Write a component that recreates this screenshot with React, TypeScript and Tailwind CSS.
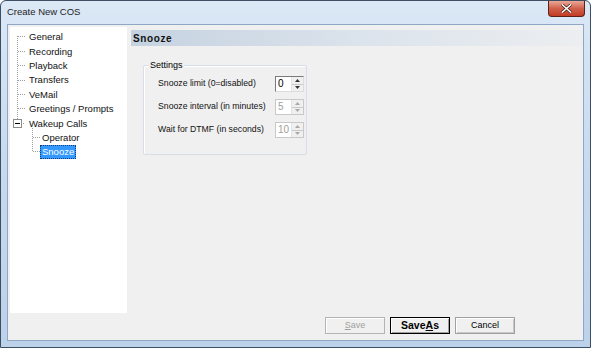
import React from 'react';

const font = "font-['Liberation_Sans',Arial,sans-serif]";

const treeItems = [
  { label: 'General', level: 0 },
  { label: 'Recording', level: 0 },
  { label: 'Playback', level: 0 },
  { label: 'Transfers', level: 0 },
  { label: 'VeMail', level: 0 },
  { label: 'Greetings / Prompts', level: 0 },
  { label: 'Wakeup Calls', level: 0 },
  { label: 'Operator', level: 1 },
  { label: 'Snooze', level: 1, selected: true },
];

function TreeLines() {
  const dot = { stroke: '#a0a0a0', strokeWidth: 1, strokeDasharray: '1 1' };
  const tops = [9.5, 24.5, 38.5, 53.5, 67.5, 81.5];
  return (
    <svg className="absolute inset-0 pointer-events-none" width="117" height="286">
      <line x1="7.5" y1="9" x2="7.5" y2="93" {...dot} />
      {tops.map(y => (
        <line key={y} x1="8" y1={y} x2="15" y2={y} {...dot} />
      ))}
      <line x1="11" y1="96.5" x2="15" y2="96.5" {...dot} />
      <rect x="3.5" y="92.5" width="8" height="8" fill="#fff" stroke="#8c8c8c" />
      <line x1="5" y1="96.5" x2="10" y2="96.5" stroke="#000" />
      <line x1="22.5" y1="101" x2="22.5" y2="124.5" {...dot} />
      <line x1="23" y1="110.5" x2="30" y2="110.5" {...dot} />
      <line x1="23" y1="124.5" x2="30" y2="124.5" {...dot} />
    </svg>
  );
}

function Spinner({ value, disabled }: { value: string; disabled?: boolean }) {
  return (
    <div className={`flex w-[29px] h-[16px] border ${disabled ? 'border-[#c8c8c8]' : 'border-[#7a7a7a] border-b-[#dcdcdc] border-r-[#dcdcdc]'} bg-white`}>
      <div className={`flex-1 pl-[2px] text-[10px] leading-[14px] ${disabled ? 'text-[#a0a0a0]' : 'text-black'}`}>{value}</div>
      <div className="w-[12px] flex flex-col border-l border-[#e3e3e3] bg-[#f0f0f0]">
        <div className="flex-1 flex items-center justify-center border-b border-[#c8c8c8]">
          <svg width="5" height="3" viewBox="0 0 5 3"><path d="M2.5 0L5 3H0z" fill={disabled ? '#a8a8a8' : '#333'} /></svg>
        </div>
        <div className="flex-1 flex items-center justify-center">
          <svg width="5" height="3" viewBox="0 0 5 3"><path d="M0 0h5L2.5 3z" fill={disabled ? '#a8a8a8' : '#333'} /></svg>
        </div>
      </div>
    </div>
  );
}

function Button({ children, variant }: { children: React.ReactNode; variant?: 'default' | 'disabled' }) {
  const style =
    variant === 'default'
      ? 'border border-black shadow-[inset_1px_1px_0_#fff,inset_-1px_-1px_0_#a0a0a0] font-bold text-[10.5px]'
      : variant === 'disabled'
      ? 'border border-[#b4b4b4] text-[#a0a0a0] shadow-[inset_1px_1px_0_#fff] text-[9px]'
      : 'border border-[#a0a0a0] shadow-[inset_1px_1px_0_#fff,inset_-1px_-1px_0_#c8c8c8] text-[9px]';
  return (
    <div className={`w-[60px] h-[17px] flex items-center justify-center bg-[#f0f0f0] whitespace-nowrap ${style}`}>
      {children}
    </div>
  );
}

const rows = [
  { label: 'Snooze limit (0=disabled)', value: '0', disabled: false },
  { label: 'Snooze interval (in minutes)', value: '5', disabled: true },
  { label: 'Wait for DTMF (in seconds)', value: '10', disabled: true },
];

export default function App() {
  return (
    <div className={`${font} w-[591px] h-[348px] flex flex-col border border-[#3d4e63] rounded-t-[6px] bg-gradient-to-b from-[#dbe8f6] via-[#c6d9ee] to-[#bcd2ea] text-black`}>
      {/* Title bar */}
      <div className="h-[23px] flex items-start flex-shrink-0">
        <div className="pl-[6px] pt-[5px] text-[9.5px] leading-[12px] text-[#1e1e1e] whitespace-nowrap">Create New COS</div>
        <div className="ml-auto mr-[5px] w-[37px] h-[16px] rounded-b-[4px] border border-t-0 border-[#5b2219] bg-gradient-to-b from-[#e8a898] via-[#d0604a] to-[#c23b22] flex items-center justify-center">
          <svg width="11" height="9" viewBox="0 0 11 9">
            <path d="M1 0.5L5.5 4.5L10 0.5M1 8.5L5.5 4.5L10 8.5" stroke="#3a1a14" strokeWidth="3" fill="none" />
            <path d="M1 0.5L5.5 4.5L10 0.5M1 8.5L5.5 4.5L10 8.5" stroke="#fff" strokeWidth="1.6" fill="none" />
          </svg>
        </div>
      </div>

      {/* Client area */}
      <div className="flex-1 mx-[6px] mb-[6px] border border-[#8da7c4] bg-[#f0f0f0] flex flex-col">
        <div className="flex flex-1">
          {/* Tree */}
          <div className="relative ml-[2px] mt-[2px] w-[117px] h-[286px] bg-white">
            <TreeLines />
            <div className="pt-[3px] flex flex-col">
              {treeItems.map(item => (
                <div key={item.label} className={`h-[14.4px] flex items-center ${item.level === 0 ? 'pl-[17px]' : 'pl-[30px]'}`}>
                  <span
                    className={`text-[9.5px] leading-[14px] px-[2px] whitespace-nowrap ${
                      item.selected ? 'bg-[#3399ff] text-white outline outline-1 outline-dotted outline-[#10407a] -outline-offset-1' : 'text-[#111]'
                    }`}
                  >
                    {item.label}
                  </span>
                </div>
              ))}
            </div>
          </div>

          {/* Right panel */}
          <div className="flex-1 pl-[4px] pt-[5px]">
            <div className="h-[16px] bg-gradient-to-r from-[#c5d2e0] via-[#dbe3ec] to-[#eceef0] flex items-center pl-[2px]">
              <span className="text-[10px] font-bold tracking-[0.6px] text-[#111]">Snooze</span>
            </div>
            <div className="relative ml-[12px] mt-[19px] w-[164px] h-[90px] border border-[#d5dfe5] rounded-[2px] shadow-[inset_1px_1px_0_#fff]">
              <div className="absolute -top-[7px] left-[5px] px-[1px] bg-[#f0f0f0] text-[9px] leading-[12px]">Settings</div>
              <div className="pl-[14px] pt-[10px] flex flex-col gap-[7px]">
                {rows.map(row => (
                  <div key={row.label} className="flex items-center h-[16px]">
                    <span className="w-[117px] text-[8.7px] text-[#111] whitespace-nowrap">{row.label}</span>
                    <Spinner value={row.value} disabled={row.disabled} />
                  </div>
                ))}
              </div>
            </div>
          </div>
        </div>

        {/* Buttons */}
        <div className="flex justify-end gap-[5px] pr-[68px] pb-[6px] pt-[4px]">
          <Button variant="disabled"><span><span className="underline">S</span>ave</span></Button>
          <Button variant="default"><span>Save<span className="underline">A</span>s</span></Button>
          <Button>Cancel</Button>
        </div>
      </div>
    </div>
  );
}
